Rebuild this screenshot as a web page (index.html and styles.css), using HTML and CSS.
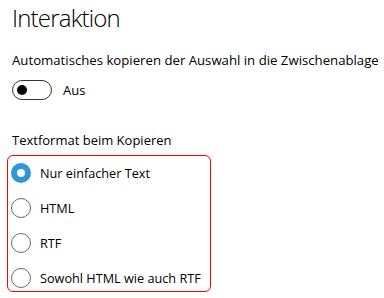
FILE: index.html
```html
<!DOCTYPE html>
<html lang="de">
<head>
<meta charset="utf-8">
<title>Interaktion</title>
<link rel="stylesheet" href="styles.css">
</head>
<body>
<main class="page">
  <h1 class="title">Interaktion</h1>
  <p class="label auto-label">Automatisches kopieren der Auswahl in die Zwischenablage</p>
  <div class="toggle-row">
    <span class="toggle"><span class="knob"></span></span>
    <span class="toggle-text">Aus</span>
  </div>
  <p class="label group-label">Textformat beim Kopieren</p>
  <div class="options">
    <div class="option"><span class="radio checked"></span><span>Nur einfacher Text</span></div>
    <div class="option"><span class="radio"></span><span>HTML</span></div>
    <div class="option"><span class="radio"></span><span>RTF</span></div>
    <div class="option"><span class="radio"></span><span>Sowohl HTML wie auch RTF</span></div>
  </div>
</main>
</body>
</html>
```

FILE: styles.css
```css
html, body {
  margin: 0;
  padding: 0;
  background: #ffffff;
}

body {
  font-family: "Open Sans", "Noto Sans", sans-serif;
  color: #000000;
}

.page {
  display: flex;
  flex-direction: column;
  align-items: flex-start;
  padding: 0 0 0 12px;
}

.title {
  margin: 0;
  height: 38px;
  font-size: 24px;
  line-height: 36px;
  font-weight: 300;
  letter-spacing: -0.8px;
}

.label {
  margin: 0;
  font-size: 13px;
  line-height: 20px;
  white-space: nowrap;
}

.auto-label {
  margin-top: 12px;
  font-size: 13.2px;
}

.toggle-row {
  display: flex;
  align-items: center;
  gap: 11px;
  margin-top: 10px;
  height: 20px;
  font-size: 13px;
}

.toggle {
  box-sizing: border-box;
  width: 40px;
  height: 20px;
  border: 1.5px solid #333333;
  border-radius: 10px;
  display: flex;
  align-items: center;
  padding-left: 3.5px;
}

.knob {
  width: 10px;
  height: 10px;
  border-radius: 50%;
  background: #000000;
}

.group-label {
  margin-top: 30px;
}

.options {
  box-sizing: border-box;
  margin: 5px 0 0 -5px;
  width: 204px;
  height: 137px;
  border: 1px solid #ff0000;
  border-radius: 6px;
  padding: 7px 0 0 3px;
  display: flex;
  flex-direction: column;
  gap: 15px;
}

.option {
  display: flex;
  align-items: center;
  gap: 9px;
  height: 20px;
  font-size: 12.7px;
  white-space: nowrap;
}

.radio {
  box-sizing: border-box;
  flex: none;
  width: 20px;
  height: 20px;
  border-radius: 50%;
  border: 1px solid #6b6b6b;
}

.radio.checked {
  border: 6px solid #2f97d5;
  background: #ffffff;
}
```
